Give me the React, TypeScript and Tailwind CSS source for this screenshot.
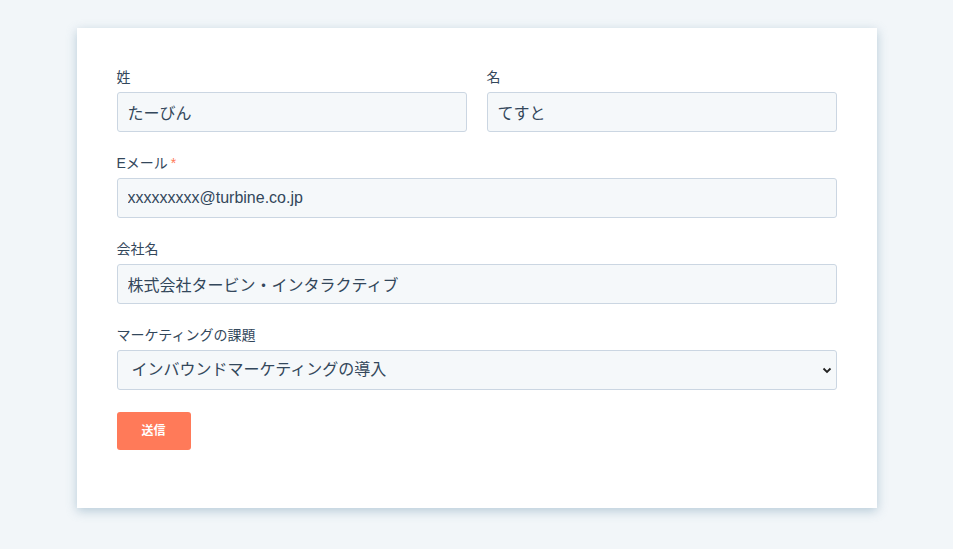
export default function App() {
  const font = { fontFamily: '"Liberation Sans", "Noto Sans CJK JP", sans-serif' };
  const input = "w-full h-[40px] rounded-[3px] border border-[#cbd6e2] bg-[#f5f8fa] px-[10px] text-[16px] text-[#33475b] outline-none";
  const label = "block h-[20px] mb-[5px] text-[14px] leading-[20px] text-[#33475b]";
  return (
    <div className="min-h-[549px] w-[953px] bg-[#f2f6f9] pt-[28px]" style={font}>
      <div className="mx-auto w-[800px] h-[480px] bg-white shadow-[0_3px_10px_rgba(110,150,175,0.45)] px-[40px] pt-[39px]">
        <div className="flex gap-[20px] mb-[21px]">
          <div className="flex-1">
            <label className={label}>姓</label>
            <input className={input} defaultValue="たーびん" />
          </div>
          <div className="flex-1">
            <label className={label}>名</label>
            <input className={input} defaultValue="てすと" />
          </div>
        </div>
        <div className="mb-[21px]">
          <label className={label}>Eメール<span className="text-[#ff7a59] ml-[3px]">*</span></label>
          <input className={input} defaultValue="xxxxxxxxx@turbine.co.jp" />
        </div>
        <div className="mb-[21px]">
          <label className={label}>会社名</label>
          <input className={input} defaultValue="株式会社タービン・インタラクティブ" />
        </div>
        <div>
          <label className={label}>マーケティングの課題</label>
          <div className="relative">
            <select className={input + " appearance-none px-[14px]"} style={font} defaultValue="a">
              <option value="a">インバウンドマーケティングの導入</option>
            </select>
            <svg className="absolute right-[5px] top-[15px] pointer-events-none" width="10" height="10" viewBox="0 0 10 10">
              <path d="M1.5 3.5 L5 7 L8.5 3.5" stroke="#222" strokeWidth="1.8" fill="none" />
            </svg>
          </div>
        </div>
        <button className="mt-[22px] w-[74px] h-[38px] rounded-[3px] bg-[#ff7a59] text-white text-[12px] font-bold">送信</button>
      </div>
    </div>
  );
}
